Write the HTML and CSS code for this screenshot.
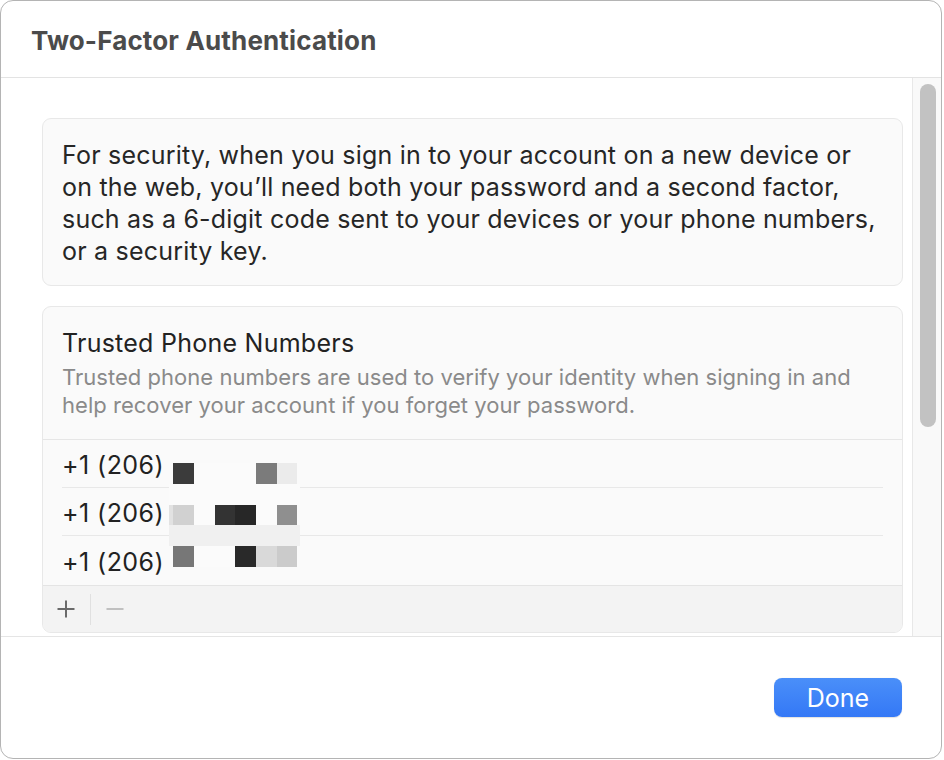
FILE: index.html
```html
<!DOCTYPE html>
<html lang="en">
<head>
<meta charset="utf-8">
<title>Two-Factor Authentication</title>
<link rel="stylesheet" href="styles.css">
</head>
<body>
<div class="window">
  <header class="titlebar">
    <h1 class="title">Two-Factor Authentication</h1>
  </header>
  <div class="content">
    <main class="scroll">
      <section class="card intro">
        <p>For security, when you sign in to your account on a new device or<br>on the web, you’ll need both your password and a second factor,<br>such as a 6-digit code sent to your devices or your phone numbers,<br>or a security key.</p>
      </section>
      <section class="card phones">
        <div class="phones-head">
          <h2>Trusted Phone Numbers</h2>
          <p>Trusted phone numbers are used to verify your identity when signing in and<br>help recover your account if you forget your password.</p>
        </div>
        <div class="rows">
          <div class="row">+1 (206)</div>
          <div class="row">+1 (206)</div>
          <div class="row last">+1 (206)</div>
          <div class="mosaic">
            <i></i><i></i><i></i><i></i><i></i><i></i><i></i><i></i>
            <i></i><i class="k3a"></i><i class="w"></i><i class="w"></i><i class="w"></i><i class="k7b"></i><i class="keb"></i><i></i>
            <i class="w"></i><i class="w"></i><i class="w"></i><i class="w"></i><i class="w"></i><i class="w"></i><i class="w"></i><i class="w"></i>
            <i class="ke2"></i><i class="kd0"></i><i class="w"></i><i class="k33"></i><i class="k28"></i><i class="w"></i><i class="k8e"></i><i></i>
            <i class="kf0"></i><i class="kf0"></i><i class="kf0"></i><i class="kf0"></i><i class="kf0"></i><i class="kf0"></i><i class="kf0"></i><i class="kf0"></i>
            <i></i><i class="k77"></i><i class="w"></i><i class="w"></i><i class="k2a"></i><i class="kd8"></i><i class="kcb"></i><i></i>
          </div>
        </div>
        <div class="toolbar">
          <svg class="tool" width="18" height="18" viewBox="0 0 18 18" aria-label="Add"><path d="M9 0.5V17.5M0.5 9H17.5" stroke="#6a6a6a" stroke-width="2" fill="none"/></svg>
          <span class="tool-sep"></span>
          <svg class="tool" width="18" height="18" viewBox="0 0 18 18" aria-label="Remove"><path d="M0.5 9H17.5" stroke="#c0c0c0" stroke-width="2" fill="none"/></svg>
        </div>
      </section>
    </main>
    <div class="scrollbar"><div class="thumb"></div></div>
  </div>
  <footer class="footer">
    <button class="done">Done</button>
  </footer>
</div>
</body>
</html>
```

FILE: styles.css
```css
* { box-sizing: border-box; }
html, body { margin: 0; padding: 0; background: #ffffff; }
body {
  font-family: "Inter", "Noto Sans", "Liberation Sans", sans-serif;
  width: 944px;
  height: 760px;
  overflow: hidden;
}
.window {
  width: 942px;
  height: 759px;
  border: 1px solid #b4b4b4;
  border-radius: 13px;
  background: #ffffff;
  display: flex;
  flex-direction: column;
  overflow: hidden;
}
.titlebar {
  height: 77px;
  border-bottom: 1px solid #e3e3e3;
  display: flex;
  align-items: center;
  padding-left: 30px;
  flex: none;
}
.title {
  margin: 0;
  font-size: 26px;
  font-weight: 700;
  letter-spacing: 0.15px;
  color: #4b4b4b;
  padding-top: 3px;
}
.content {
  height: 558px;
  flex: none;
  display: flex;
  overflow: hidden;
}
.scroll {
  flex: 1;
  padding: 40px 9px 0 41px;
  overflow: hidden;
}
.card {
  background: #fafafa;
  border: 1px solid #e8e8e8;
  border-radius: 9px;
}
.intro {
  padding: 20px 2px 18px 19px;
  margin-bottom: 20px;
  white-space: nowrap;
}
.intro p {
  margin: 0;
  font-size: 25px;
  line-height: 32px;
  letter-spacing: 0.2px;
  color: #262626;
}
.phones { overflow: hidden; }
.phones-head {
  padding: 20px 2px 20px 19px;
  border-bottom: 1px solid #e6e6e6;
  white-space: nowrap;
}
.phones-head h2 {
  margin: 0 0 4px 0;
  font-size: 25px;
  font-weight: 400;
  line-height: 32px;
  letter-spacing: 0.25px;
  color: #222222;
}
.phones-head p {
  margin: 0;
  font-size: 22px;
  line-height: 28px;
  letter-spacing: 0.03px;
  color: #8a8a8a;
}
.rows {
  position: relative;
  padding: 0 19px 0 19px;
}
.row {
  height: 48px;
  border-bottom: 1px solid #e8e8e8;
  display: flex;
  align-items: center;
  font-size: 25px;
  letter-spacing: 0.45px;
  color: #222222;
  padding-top: 2px;
}
.row.last { border-bottom: none; height: 49px; }
.mosaic {
  position: absolute;
  left: 126px;
  top: 2px;
  width: 131px;
  display: grid;
  grid-template-columns: 4.3px repeat(6, 20.7px) 2.5px;
  grid-template-rows: 21.3px 20.7px 20.7px 20.7px 20.7px 21px;
}
.mosaic i { display: block; background: #fafafa; }
.mosaic i.w { background: #fbfbfb; }
.mosaic i.k3a { background: #3b3b3b; }
.mosaic i.k7b { background: #7b7b7b; }
.mosaic i.keb { background: #ebebeb; }
.mosaic i.ke2 { background: #e2e2e2; }
.mosaic i.kd0 { background: #d1d1d1; }
.mosaic i.k33 { background: #333333; }
.mosaic i.k28 { background: #272727; }
.mosaic i.k8e { background: #8f8f8f; }
.mosaic i.kf0 { background: #f0f0f0; }
.mosaic i.k77 { background: #777777; }
.mosaic i.k2a { background: #292929; }
.mosaic i.kd8 { background: #d9d9d9; }
.mosaic i.kcb { background: #cbcbcb; }
.toolbar {
  height: 47px;
  background: #f3f3f3;
  border-top: 1px solid #e4e4e4;
  display: flex;
  align-items: center;
  padding-left: 14px;
}
.tool { display: block; flex: none; }
.tool-sep {
  width: 1px;
  height: 31px;
  background: #e0e0e0;
  margin: 0 15px 0 15px;
}
.scrollbar {
  width: 29px;
  flex: none;
  border-left: 1px solid #e8e8e8;
  background: #f9f9f9;
  padding: 6px 5px 0 7px;
}
.thumb {
  width: 16px;
  height: 343px;
  border-radius: 8px;
  background: #c2c2c2;
}
.footer {
  flex: 1;
  border-top: 1px solid #e5e5e5;
  display: flex;
  justify-content: flex-end;
  align-items: flex-start;
  padding: 41px 39px 0 0;
}
.done {
  width: 128px;
  height: 39px;
  border: none;
  border-radius: 8px;
  background: linear-gradient(#4a8ff9, #3478f6);
  color: #ffffff;
  font-family: "Inter", "Noto Sans", "Liberation Sans", sans-serif;
  font-size: 25px;
  font-weight: 400;
  padding: 0;
  box-shadow: 0 0.5px 1px rgba(0,0,0,0.12);
}
```
